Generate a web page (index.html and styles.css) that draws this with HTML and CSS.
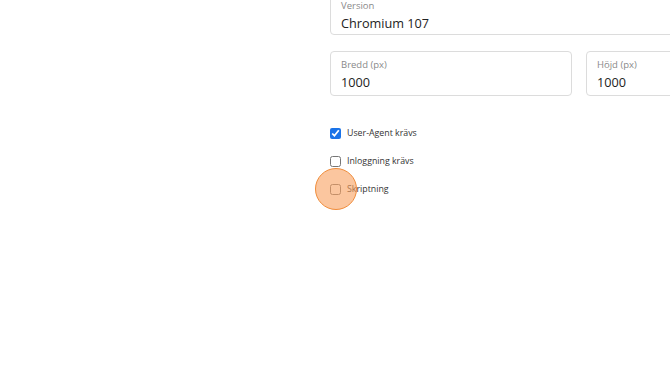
FILE: index.html
```html
<!DOCTYPE html>
<html lang="sv">
<head>
    <meta charset="UTF-8">
    <title>Webbläsarinställningar</title>
    <link rel="stylesheet" href="styles.css">
</head>
<body>
    <div class="panel">
        <div class="field field-top">
            <label class="field-label">Version</label>
            <div class="field-value">Chromium 107</div>
        </div>

        <div class="field-row">
            <div class="field">
                <label class="field-label">Bredd (px)</label>
                <div class="field-value">1000</div>
            </div>
            <div class="field">
                <label class="field-label">Höjd (px)</label>
                <div class="field-value">1000</div>
            </div>
        </div>

        <div class="options">
            <label class="option">
                <input type="checkbox" checked>
                <span>User-Agent krävs</span>
            </label>
            <label class="option">
                <input type="checkbox">
                <span>Inloggning krävs</span>
            </label>
            <label class="option">
                <span class="box-wrap">
                    <input type="checkbox">
                    <span class="click-marker"></span>
                </span>
                <span>Skriptning</span>
            </label>
        </div>
    </div>
</body>
</html>
```

FILE: styles.css
```css
body {
    margin: 0;
    background: #fff;
    color: #222;
    font-family: 'Open Sans', sans-serif;
    overflow: hidden;
    height: 373px;
}

.panel {
    width: 498px;
    margin: -8px 0 0 330px;
    display: flex;
    flex-direction: column;
    gap: 16px;
}

.field {
    flex: 1;
    border: 1px solid #dcdcdc;
    border-radius: 4px;
    padding: 6px 10px 3px;
    display: flex;
    flex-direction: column;
}

.field-top {
    padding-bottom: 1px;
}

.field-label {
    font-size: 9.5px;
    line-height: 14px;
    color: #8a8a8a;
}

.field-value {
    font-size: 12.7px;
    line-height: 20px;
    color: #222;
}

.field-row {
    display: flex;
    gap: 14px;
}

.options {
    display: flex;
    flex-direction: column;
    gap: 16px;
    margin-top: 15px;
}

.option {
    display: flex;
    align-items: center;
    gap: 6px;
    font-size: 8.8px;
    line-height: 12px;
    color: #333;
}

.option input {
    width: 11px;
    height: 11px;
    margin: 0;
    accent-color: #1a73e8;
}

.box-wrap {
    position: relative;
    display: flex;
}

.click-marker {
    position: absolute;
    left: 50%;
    top: 50%;
    width: 40px;
    height: 40px;
    margin: -21px 0 0 -21px;
    border-radius: 50%;
    border: 1.5px solid #f08c3a;
    background: rgba(249, 160, 95, 0.6);
    pointer-events: none;
}
```
